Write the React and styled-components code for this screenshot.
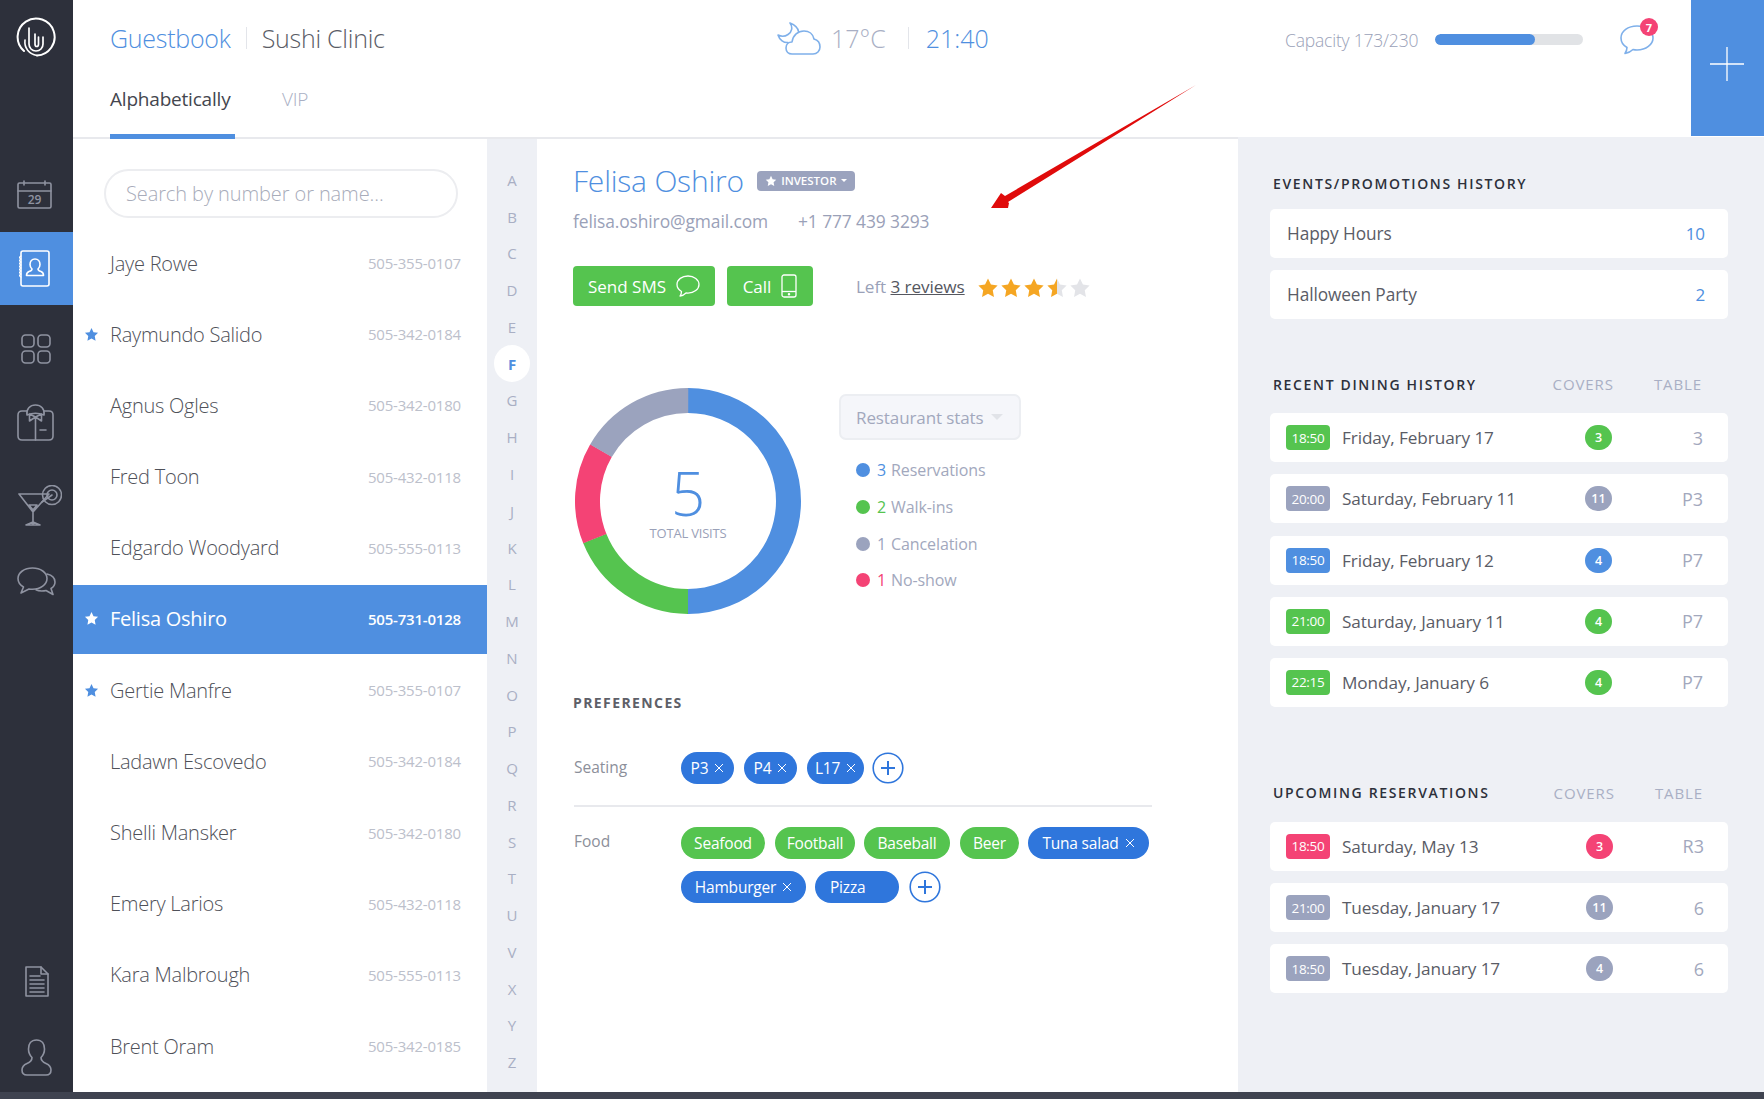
import React from "react";
import styled, { createGlobalStyle } from "styled-components";

const Global = createGlobalStyle`
  html, body { margin: 0; padding: 0; background: #fff; }
  body { font-family: "Open Sans", "Liberation Sans", sans-serif; }
  * { box-sizing: border-box; }
  #root { height: 1099px; overflow: hidden; }
`;

const BLUE = "#4f8fe0", GREEN = "#55c44f", PINK = "#f44375", GRAY = "#9ba3be", CHIP = "#2f76dc";
const tone = { blue: BLUE, green: GREEN, pink: PINK, gray: GRAY };

const Page = styled.div`position: relative; display: flex; flex-direction: column; width: 1764px; height: 1099px;`;
const Shell = styled.div`flex: 1; display: flex; min-height: 0;`;
const Footer = styled.div`height: 7px; background: #3f4350;`;

const Rail = styled.nav`width: 73px; background: #2d303b; display: flex; flex-direction: column;`;
const Logo = styled.div`height: 157px; padding: 16px 0 0 15px;`;
const NavItem = styled.div`
  height: ${p => p.$h}px; display: flex; align-items: center; justify-content: center;
  background: ${p => (p.$active ? BLUE : "transparent")};
  padding-right: ${p => p.$pr || 0}px; padding-left: ${p => p.$pl || 0}px;
`;
const RailSpacer = styled.div`flex: 1;`;

const Main = styled.div`flex: 1; display: flex; flex-direction: column; min-width: 0;`;
const Header = styled.header`height: 139px; display: flex; border-bottom: 2px solid #e8e9ed; background: #fff;`;
const HeaderBody = styled.div`flex: 1; display: flex; flex-direction: column; padding-left: 37px;`;
const TopRow = styled.div`height: 76px; display: flex; align-items: center;`;
const Title = styled.div`width: 667px; display: flex; align-items: center; font-size: 25px; letter-spacing: -0.25px; font-weight: 300; color: #5a5c66; white-space: nowrap;`;
const TitleBlue = styled.span`color: ${BLUE};`;
const VLine = styled.span`width: 1px; height: 22px; background: #e3e5ea; margin: 0 ${p => p.$mr || 15}px 0 ${p => p.$ml || 15}px;`;
const Weather = styled.div`width: 508px; display: flex; align-items: center; font-size: 25px; font-weight: 300; color: #a9afc4;`;
const Temp = styled.span`margin-left: 10px;`;
const Capacity = styled.div`font-size: 17.5px; font-weight: 300; color: #9aa1b8; letter-spacing: -0.2px; white-space: nowrap; width: 150px; margin-top: 3px;`;
const Bar = styled.div`width: 148px; height: 11px; margin-top: 2px; border-radius: 6px; background: #e1e3e6; overflow: hidden;`;
const BarFill = styled.div`height: 100%; background: ${BLUE}; border-radius: 6px;`;
const Bubble = styled.div`position: relative; margin-left: 36px; width: 36px; height: 36px;`;
const Badge = styled.span`
  position: absolute; left: 21px; top: -2px; width: 18px; height: 18px; border-radius: 50%;
  background: ${PINK}; color: #fff; font-size: 11px; font-weight: 700; display: flex; align-items: center; justify-content: center;
`;
const Tabs = styled.div`flex: 1; display: flex; align-items: flex-end; margin-bottom: -2px;`;
const Tab = styled.div`
  width: ${p => p.$w}px; padding-top: 6px; margin-right: ${p => p.$mr || 0}px; height: 59px;
  font-size: 19px; letter-spacing: -0.2px; white-space: nowrap;
  font-weight: ${p => (p.$active ? 400 : 300)}; color: ${p => (p.$active ? "#44464e" : "#a9afc4")};
  border-bottom: ${p => (p.$active ? `5px solid ${BLUE}` : "0")};
`;
const PlusBox = styled.div`width: 73.5px; height: 136px; padding-bottom: 9px; background: ${BLUE}; display: flex; align-items: center; justify-content: center;`;

const Content = styled.div`flex: 1; display: flex; min-height: 0;`;
const ListPanel = styled.section`width: 414px; display: flex; flex-direction: column; padding-top: 30px;`;
const Search = styled.div`
  width: 354px; height: 49px; margin-left: 31px; margin-bottom: 11.5px; border: 2px solid #ecedf0; border-radius: 25px;
  padding-left: 20px; display: flex; align-items: center; font-size: 20px; font-weight: 300; color: #a8acba; letter-spacing: -0.1px;
`;
const Rows = styled.div`display: flex; flex-direction: column; gap: 2.2px;`;
const Row = styled.div`
  position: relative; height: 69px; display: flex; align-items: center; justify-content: space-between;
  padding: 0 26px 2px 37px; background: ${p => (p.$active ? BLUE : "transparent")};
`;
const Name = styled.span`font-size: 20px; font-weight: ${p => (p.$active ? 400 : 300)}; letter-spacing: -0.25px; color: ${p => (p.$active ? "#fff" : "#4f5159")};`;
const Phone = styled.span`font-size: 15px; font-weight: ${p => (p.$active ? 600 : 400)}; letter-spacing: -0.2px; color: ${p => (p.$active ? "#fff" : "#bcc0cb")};`;
const RowStar = styled.span`position: absolute; left: 11px; top: 26px; display: flex;`;

const Alphabet = styled.div`width: 50px; background: #eef0f5; display: flex; flex-direction: column; align-items: center; padding-top: 22.5px;`;
const Letter = styled.div`
  height: 36.77px; width: 36px; flex: none; display: flex; align-items: center; justify-content: center; border-radius: 50%;
  font-size: 15px; font-weight: ${p => (p.$active ? 700 : 400)};
  color: ${p => (p.$active ? BLUE : "#a9afc4")}; background: ${p => (p.$active ? "#fff" : "transparent")};
`;

const Detail = styled.section`width: 700.5px; padding: 21px 0 0 36px;`;
const NameRow = styled.div`display: flex; align-items: center; height: 40px;`;
const Big = styled.h1`margin: 0; font-size: 30px; font-weight: 300; color: ${BLUE}; letter-spacing: -0.2px;`;
const Tag = styled.span`
  margin: 1px 0 0 13px; width: 98px; height: 20px; border-radius: 4px; background: ${GRAY}; color: #fff;
  font-size: 11.5px; font-weight: 600; display: flex; align-items: center; justify-content: center; gap: 4px;
`;
const Caret = styled.span`
  display: inline-block; width: 0; height: 0; margin-left: ${p => p.$ml || 0}px;
  border-left: ${p => p.$s}px solid transparent; border-right: ${p => p.$s}px solid transparent; border-top: ${p => p.$s}px solid ${p => p.$c};
`;
const Contacts = styled.div`display: flex; gap: 30px; margin-top: 9px; height: 24px; align-items: center; font-size: 17.4px; color: #9aa1b8; letter-spacing: -0.1px;`;
const Actions = styled.div`display: flex; align-items: center; margin-top: 33px;`;
const Action = styled.div`
  width: ${p => p.$w}px; height: 40px; margin-right: ${p => p.$mr}px; border-radius: 4px; background: ${GREEN}; color: #fff;
  font-size: 17px; display: flex; align-items: center; justify-content: center; gap: 10px;
`;
const Reviews = styled.div`font-size: 17.2px; color: #9aa1b8; letter-spacing: -0.1px; margin-left: 43px; margin-right: 12px;`;
const ReviewLink = styled.span`color: #55575f; text-decoration: underline;`;
const Stars = styled.div`display: flex; gap: 1px; margin-top: 4px;`;

const ChartRow = styled.div`display: flex; margin: 82px 0 0 2px;`;
const Donut = styled.div`position: relative; width: 226px; height: 226px;`;
const DonutLabel = styled.div`position: absolute; inset: 0; display: flex; flex-direction: column; align-items: center; justify-content: center;`;
const DonutNum = styled.div`font-size: 60px; font-weight: 300; line-height: 48px; color: ${BLUE}; margin-top: 8px;`;
const DonutCap = styled.div`font-size: 13px; line-height: 18px; color: #9aa1b8; letter-spacing: -0.2px; margin-top: 7px;`;
const Stats = styled.div`margin: 6px 0 0 38px;`;
const Select = styled.div`
  width: 182px; height: 46px; border: 2px solid #eceef2; border-radius: 7px; background: #f5f6fa; padding-left: 15px;
  display: flex; align-items: center; font-size: 17px; color: #a2a8bd; letter-spacing: -0.1px;
`;
const Legend = styled.ul`list-style: none; margin: 12px 0 0 17px; padding: 0;`;
const LegendItem = styled.li`height: 36.7px; display: flex; align-items: center; font-size: 16px; color: #a2a8bd; letter-spacing: -0.1px;`;
const Dot = styled.span`width: 14px; height: 14px; border-radius: 50%; background: ${p => tone[p.$t]}; margin-right: 7px;`;
const Count = styled.span`color: ${p => tone[p.$t]}; margin-right: 5px;`;

const Prefs = styled.div`margin-top: 79px;`;
const PrefTitle = styled.h3`margin: 0; font-size: 14px; font-weight: 700; letter-spacing: 1.4px; color: #5e6068; line-height: 20px;`;
const PrefRow = styled.div`display: flex; width: 578px; margin-left: 1px; ${p => p.$line && "border-bottom: 2px solid #e8e9ed;"} padding: ${p => p.$pad};`;
const PrefLabel = styled.div`width: 107px; font-size: 15.5px; color: #8c8f9a; line-height: 30px; flex: none; margin-top: ${p => p.$mt || 0}px;`;
const Chips = styled.div`display: flex; flex-wrap: wrap; align-items: center; gap: 12px 0;`;
const Chip = styled.span`
  width: ${p => p.$w}px; height: 32px; margin-right: ${p => p.$mr ?? 10}px; border-radius: 16px; background: ${p => (p.$green ? GREEN : CHIP)}; color: #fff;
  font-size: 15.5px; letter-spacing: -0.2px; display: flex; align-items: center; justify-content: ${p => (p.$left ? "flex-start" : "center")}; gap: 6px;
  padding-left: ${p => (p.$left ? 15 : 0)}px;
`;

const Side = styled.aside`flex: 1; background: #eef0f5; padding: 34px 36px 0 32.5px; margin-top: -2px;`;
const SideHead = styled.div`display: flex; align-items: center; height: 24px; padding: 0 ${p => p.$pr}px 0 3px; margin-top: ${p => p.$mt || 0}px;`;
const SideTitle = styled.h3`flex: 1; margin: 0; font-size: 14px; font-weight: 600; letter-spacing: 1.65px; color: #2d303b;`;
const ColLabel = styled.span`font-size: 15px; color: #a9afc4; letter-spacing: 0.9px; margin-left: ${p => p.$ml || 0}px;`;
const Cards = styled.div`display: flex; flex-direction: column; gap: 12.2px; margin-top: ${p => p.$mt}px;`;
const Card = styled.div`
  height: 49px; background: #fff; border-radius: 5px; display: grid; align-items: center;
  grid-template-columns: 44px 1fr 27px 91px; padding: 0 ${p => p.$pr}px 0 16px;
`;
const EventCard = styled.div`
  height: 49px; background: #fff; border-radius: 5px; display: flex; align-items: center; justify-content: space-between;
  padding: 0 23px 0 17px; font-size: 17.3px; color: #5a5c66; letter-spacing: -0.1px;
`;
const EventNum = styled.span`color: ${BLUE}; font-size: 17px;`;
const Time = styled.span`height: 25px; border-radius: 4px; background: ${p => tone[p.$t]}; color: #fff; font-size: 13.5px; letter-spacing: -0.3px; display: flex; align-items: center; justify-content: center;`;
const DateText = styled.span`font-size: 17.2px; color: #5a5c66; margin-left: 12px; letter-spacing: -0.1px;`;
const Cover = styled.span`width: 27px; height: 25px; border-radius: 13px; background: ${p => tone[p.$t]}; color: #fff; font-size: 12.5px; font-weight: 600; display: flex; align-items: center; justify-content: center;`;
const TableNo = styled.span`text-align: right; font-size: 18px; color: #a2a8bd;`;

const Overlay = styled.svg`position: absolute; left: 0; top: 0; pointer-events: none;`;

const S = { fill: "none", stroke: "#8f93a1", strokeWidth: 1.6, strokeLinecap: "round", strokeLinejoin: "round" };
const W = { ...S, stroke: "#fff" };

const LogoIcon = () => (
  <svg width="42" height="42" viewBox="0 0 42 42" fill="none" stroke="#fff" strokeLinecap="round">
    <path d="M22 39.500A18.500 18.500 0 1 0 9 35" strokeWidth="2" />
    <path d="M10 24c-1 8 4 14 12 15.500" strokeWidth="1.600" />
    <path d="M14 12v16c0 4 3 7 7 7s7-3 7-7v-7" strokeWidth="1.700" />
    <path d="M20 18v10c0 1.500 .8 2.500 1.800 2.500s1.700-1 1.700-2.500v-7" strokeWidth="1.700" />
  </svg>
);
const CalendarIcon = () => (
  <svg width="35" height="29" viewBox="0 0 35 29">
    <rect x="1" y="3" width="33" height="25" rx="1.500" {...S} />
    <path d="M1 11h33M7 1v4M28 1v4" {...S} />
    <text x="17.500" y="24" textAnchor="middle" fontSize="12" fontWeight="600" fill="#8f93a1" fontFamily="Open Sans, sans-serif">29</text>
  </svg>
);
const BookIcon = () => (
  <svg width="31" height="37" viewBox="0 0 31 37">
    <rect x="2" y="1" width="28" height="35" rx="2" {...W} />
    <path d="M2 6c-2 1-2 2 0 3-2 1-2 2 0 3-2 1-2 2 0 3-2 1-2 2 0 3-2 1-2 2 0 3-2 1-2 2 0 3-2 1-2 2 0 3" {...W} strokeWidth="1.200" />
    <path d="M16 9c-3 0-5 2.500-5 5.500 0 2 1 3.500 2 4.500 0 1.500-1 2-3 2.500-2 .8-2.500 2-2.500 4h17c0-2-.5-3.200-2.500-4-2-.5-3-1-3-2.500 1-1 2-2.500 2-4.500 0-3-2-5.500-5-5.500z" {...W} />
  </svg>
);
const GridIcon = () => (
  <svg width="30" height="30" viewBox="0 0 30 30">
    {[[1, 1], [17, 1], [1, 17], [17, 17]].map(([x, y]) => <rect key={x + "-" + y} x={x} y={y} width="12" height="12" rx="3.500" {...S} />)}
  </svg>
);
const ShirtIcon = () => (
  <svg width="37" height="37" viewBox="0 0 37 37">
    <path d="M10 7H5C2.500 7 1 8.500 1 11v21c0 2.500 1.500 4 4 4h27c2.500 0 4-1.500 4-4V11c0-2.500-1.500-4-4-4h-5" {...S} />
    <path d="M10 11C9 5 13 1 18.500 1S28 5 27 11c-5-2-12-2-17 0z" {...S} />
    <path d="M18.500 13l-6-3v7zM18.500 13l6-3v7zM18.500 14v22M23 26h6" {...S} />
  </svg>
);
const CocktailIcon = () => (
  <svg width="44" height="41" viewBox="0 0 44 41">
    <path d="M1 9h30L15 27zM15 27v12M8 40h14l-7-3zM11 20h8l-4 5z" {...S} />
    <circle cx="34" cy="10" r="9.500" {...S} />
    <circle cx="34" cy="10" r="5" {...S} />
    <path d="M24 17l10-7" {...S} />
  </svg>
);
const ChatRailIcon = () => (
  <svg width="39" height="30" viewBox="0 0 39 30">
    <path d="M15.500 1C7.500 1 1 5.500 1 11.500 1 15 3 18 6.500 20L4 26l8-4c1 .2 2.300.3 3.500.3 8 0 14.500-4.800 14.500-10.800S23.500 1 15.500 1z" {...S} />
    <path d="M30 7c4.500 1 8 4 8 8 0 2.500-1.500 5-4 6.500l2 6-7-4c-1.500.5-3 .5-4.500.5-2 0-4-.4-5.500-1.200" {...S} />
  </svg>
);
const DocIcon = () => (
  <svg width="24" height="31" viewBox="0 0 24 31">
    <path d="M1 1h15l7 7v22H1z" {...S} />
    <path d="M16 1v7h7M5 10h10M5 14h14M5 18h14M5 22h14M5 26h14" {...S} />
  </svg>
);
const UserIcon = () => (
  <svg width="31" height="37" viewBox="0 0 31 37">
    <path d="M15.500 1C10 1 7.500 5 7.500 10c0 3.500 1.500 6.500 3.500 8.500 0 3-1.500 4.500-5 6-3 1.300-5 3-5 6.500 0 3 2 5 5 5h19c3 0 5-2 5-5 0-3.500-2-5.200-5-6.500-3.500-1.500-5-3-5-6 2-2 3.500-5 3.500-8.500 0-5-2.500-9-8-9z" {...S} />
  </svg>
);
const CloudIcon = () => (
  <svg width="44" height="33" viewBox="0 0 44 33" fill="none" stroke="#7fb0ea" strokeWidth="1.600" strokeLinecap="round" strokeLinejoin="round">
    <path d="M13 1C16 5 15 10 11 12.500 8 14.500 4 14.500 1 13 2.500 18 7 21 11 20.500M13 1C18 3 21 6 21.500 9.500" />
    <path d="M15 32C11.500 32 9 29.500 9 26 9 22.500 11.500 20 15 20 16 13 21 9 27 9 32 9 36 12 37 17 41 18 43 21 43 25 43 29 40 32 36 32Z" />
  </svg>
);
const BubbleIcon = () => (
  <svg width="36" height="36" viewBox="0 0 36 36" fill="none" stroke="#7fb0ea" strokeWidth="1.600" strokeLinejoin="round">
    <path d="M18 6C9 6 2 11 2 18c0 4 2.500 7.500 6 9.500 0 2-.8 4-2 6 3-.5 6-2 8-4 1.500.4 2.800.5 4 .5 9 0 16-5.500 16-12S27 6 18 6z" />
  </svg>
);
const PlusThin = () => (
  <svg width="34" height="34" viewBox="0 0 34 34" stroke="#fff" strokeWidth="1.300"><path d="M17 0v34M0 17h34" /></svg>
);
const STAR = "M12 1.500l3.200 6.800 7.300 1-5.300 5.100 1.300 7.400L12 18.300l-6.500 3.500 1.300-7.400L1.500 9.300l7.300-1z";
const Star = ({ size = 22, color = "#f5a623", half }) => (
  <svg width={size} height={size} viewBox="0 0 24 24">
    {half && <defs><linearGradient id="half"><stop offset="50%" stopColor="#f5a623" /><stop offset="50%" stopColor="#e3e4e8" /></linearGradient></defs>}
    <path d={STAR} fill={half ? "url(#half)" : color} />
  </svg>
);
const SmsIcon = () => (
  <svg width="24" height="22" viewBox="0 0 24 22" fill="none" stroke="#fff" strokeWidth="1.300" strokeLinejoin="round">
    <path d="M12 1C6 1 1 4.500 1 9.500c0 3 2 5.500 4.500 7 0 1.500-.5 3-1.500 4.500 2.500-.3 4.500-1.500 6-3 .7.100 1.300.1 2 .1 6 0 11-3.800 11-8.600S18 1 12 1z" />
  </svg>
);
const PhoneIcon = () => (
  <svg width="16" height="24" viewBox="0 0 16 24" fill="none" stroke="#fff" strokeWidth="1.300">
    <rect x="1" y="1" width="14" height="22" rx="2" /><path d="M1 17.500h14" /><circle cx="8" cy="20.300" r=".6" fill="#fff" />
  </svg>
);
const Cross = () => (
  <svg width="10" height="10" viewBox="0 0 10 10" stroke="#fff" strokeWidth="1"><path d="M1 1l8 8M9 1l-8 8" /></svg>
);
const AddButton = () => (
  <svg width="32" height="32" viewBox="0 0 32 32" fill="#fff" stroke={CHIP}>
    <circle cx="16" cy="16" r="14.800" strokeWidth="1.600" /><path d="M16 9v14M9 16h14" strokeWidth="2" />
  </svg>
);

const ARCS = [["blue", 180], ["green", 68], ["pink", 52], ["gray", 60]];
const DonutChart = () => {
  const r = 100.5, c = 2 * Math.PI * r;
  let start = 0;
  return (
    <svg width="226" height="226" viewBox="0 0 226 226">
      {ARCS.map(([k, deg]) => {
        const el = (
          <circle key={k} cx="113" cy="113" r={r} fill="none" stroke={tone[k]} strokeWidth="25"
            strokeDasharray={`${(deg / 360) * c} ${c}`} transform={`rotate(${start - 90} 113 113)`} />
        );
        start += deg;
        return el;
      })}
    </svg>
  );
};

const GUESTS = [
  ["Jaye Rowe", "505-355-0107"], ["Raymundo Salido", "505-342-0184", 1], ["Agnus Ogles", "505-342-0180"],
  ["Fred Toon", "505-432-0118"], ["Edgardo Woodyard", "505-555-0113"], ["Felisa Oshiro", "505-731-0128", 1, 1],
  ["Gertie Manfre", "505-355-0107", 1], ["Ladawn Escovedo", "505-342-0184"], ["Shelli Mansker", "505-342-0180"],
  ["Emery Larios", "505-432-0118"], ["Kara Malbrough", "505-555-0113"], ["Brent Oram", "505-342-0185"],
];
const RECENT = [
  ["18:50", "green", "Friday, February 17", "3", "3"], ["20:00", "gray", "Saturday, February 11", "11", "P3"],
  ["18:50", "blue", "Friday, February 12", "4", "P7"], ["21:00", "green", "Saturday, January 11", "4", "P7"],
  ["22:15", "green", "Monday, January 6", "4", "P7"],
];
const UPCOMING = [
  ["18:50", "pink", "Saturday, May 13", "3", "R3"], ["21:00", "gray", "Tuesday, January 17", "11", "6"],
  ["18:50", "gray", "Tuesday, January 17", "4", "6"],
];

const VisitCards = ({ items, pr }) => (
  <Cards $mt={17}>
    {items.map(([t, c, d, n, tb], i) => (
      <Card key={i} $pr={pr}>
        <Time $t={c}>{t}</Time><DateText>{d}</DateText><Cover $t={c}>{n}</Cover><TableNo>{tb}</TableNo>
      </Card>
    ))}
  </Cards>
);

export default function App() {
  return (
    <Page>
      <Global />
      <Shell>
        <Rail>
          <Logo><LogoIcon /></Logo>
          <NavItem $h={75} $pr={4}><CalendarIcon /></NavItem>
          <NavItem $h={73} $active $pr={4}><BookIcon /></NavItem>
          <NavItem $h={88} $pr={2}><GridIcon /></NavItem>
          <NavItem $h={58} $pr={2}><ShirtIcon /></NavItem>
          <NavItem $h={108} $pl={7}><CocktailIcon /></NavItem>
          <NavItem $h={46}><ChatRailIcon /></NavItem>
          <RailSpacer />
          <NavItem $h={82}><DocIcon /></NavItem>
          <NavItem $h={70}><UserIcon /></NavItem>
        </Rail>
        <Main>
          <Header>
            <HeaderBody>
              <TopRow>
                <Title><TitleBlue>Guestbook</TitleBlue><VLine />Sushi Clinic</Title>
                <Weather>
                  <CloudIcon /><Temp>17°C</Temp><VLine $ml={22} $mr={17} /><TitleBlue>21:40</TitleBlue>
                </Weather>
                <Capacity>Capacity 173/230</Capacity>
                <Bar><BarFill style={{ width: `${(100 / 148) * 100}%` }} /></Bar>
                <Bubble><BubbleIcon /><Badge>7</Badge></Bubble>
              </TopRow>
              <Tabs>
                <Tab $active $w={125} $mr={47}>Alphabetically</Tab>
                <Tab $w={50}>VIP</Tab>
              </Tabs>
            </HeaderBody>
            <PlusBox><PlusThin /></PlusBox>
          </Header>
          <Content>
            <ListPanel>
              <Search>Search by number or name...</Search>
              <Rows>
                {GUESTS.map(([n, p, star, active]) => (
                  <Row key={n} $active={active}>
                    {star && <RowStar><Star size={15} color={active ? "#fff" : BLUE} /></RowStar>}
                    <Name $active={active}>{n}</Name>
                    <Phone $active={active}>{p}</Phone>
                  </Row>
                ))}
              </Rows>
            </ListPanel>
            <Alphabet>
              {"ABCDEFGHIJKLMNOPQRSTUVXYZ".split("").map(l => (
                <Letter key={l} $active={l === "F"}>{l}</Letter>
              ))}
            </Alphabet>
            <Detail>
              <NameRow>
                <Big>Felisa Oshiro</Big>
                <Tag><Star size={12} color="#fff" />INVESTOR<Caret $s={3} $c="#fff" /></Tag>
              </NameRow>
              <Contacts><span>felisa.oshiro@gmail.com</span><span>+1 777 439 3293</span></Contacts>
              <Actions>
                <Action $w={142} $mr={12}>Send SMS <SmsIcon /></Action>
                <Action $w={86} $mr={0}>Call <PhoneIcon /></Action>
                <Reviews>Left <ReviewLink>3 reviews</ReviewLink></Reviews>
                <Stars>
                  <Star /><Star /><Star /><Star half /><Star color="#e3e4e8" />
                </Stars>
              </Actions>
              <ChartRow>
                <Donut>
                  <DonutChart />
                  <DonutLabel><DonutNum>5</DonutNum><DonutCap>TOTAL VISITS</DonutCap></DonutLabel>
                </Donut>
                <Stats>
                  <Select>Restaurant stats<Caret $ml={7} $s={6} $c="#e1e3e8" /></Select>
                  <Legend>
                    <LegendItem><Dot $t="blue" /><Count $t="blue">3</Count>Reservations</LegendItem>
                    <LegendItem><Dot $t="green" /><Count $t="green">2</Count>Walk-ins</LegendItem>
                    <LegendItem><Dot $t="gray" /><Count $t="gray">1</Count>Cancelation</LegendItem>
                    <LegendItem><Dot $t="pink" /><Count $t="pink">1</Count>No-show</LegendItem>
                  </Legend>
                </Stats>
              </ChartRow>
              <Prefs>
                <PrefTitle>PREFERENCES</PrefTitle>
                <PrefRow $line $pad="39px 0 21px">
                  <PrefLabel>Seating</PrefLabel>
                  <Chips>
                    <Chip $w={53}>P3 <Cross /></Chip>
                    <Chip $w={53}>P4 <Cross /></Chip>
                    <Chip $w={57} $mr={8}>L17 <Cross /></Chip>
                    <AddButton />
                  </Chips>
                </PrefRow>
                <PrefRow $pad="20px 0 0">
                  <PrefLabel $mt={-1}>Food</PrefLabel>
                  <Chips>
                    <Chip $green $w={84}>Seafood</Chip>
                    <Chip $green $w={80} $mr={9}>Football</Chip>
                    <Chip $green $w={86}>Baseball</Chip>
                    <Chip $green $w={59} $mr={9}>Beer</Chip>
                    <Chip $w={121} $mr={0}>Tuna salad <Cross /></Chip>
                    <Chip $w={125} $mr={9}>Hamburger <Cross /></Chip>
                    <Chip $w={84} $left>Pizza</Chip>
                    <AddButton />
                  </Chips>
                </PrefRow>
              </Prefs>
            </Detail>
            <Side>
              <SideHead $pr={0}><SideTitle>EVENTS/PROMOTIONS HISTORY</SideTitle></SideHead>
              <Cards $mt={14}>
                <EventCard>Happy Hours<EventNum>10</EventNum></EventCard>
                <EventCard>Halloween Party<EventNum>2</EventNum></EventCard>
              </Cards>
              <SideHead $pr={26} $mt={53}>
                <SideTitle>RECENT DINING HISTORY</SideTitle>
                <ColLabel>COVERS</ColLabel><ColLabel $ml={40}>TABLE</ColLabel>
              </SideHead>
              <VisitCards items={RECENT} pr={25} />
              <SideHead $pr={25} $mt={74}>
                <SideTitle>UPCOMING RESERVATIONS</SideTitle>
                <ColLabel>COVERS</ColLabel><ColLabel $ml={40}>TABLE</ColLabel>
              </SideHead>
              <VisitCards items={UPCOMING} pr={24} />
            </Side>
          </Content>
        </Main>
      </Shell>
      <Footer />
      <Overlay width="1764" height="1099" viewBox="0 0 1764 1099">
        <path d="M1196 85L1005 196 1001 193 991 208 1008 208 1009 203 1008 202z" fill="#e00b0b" />
      </Overlay>
    </Page>
  );
}
